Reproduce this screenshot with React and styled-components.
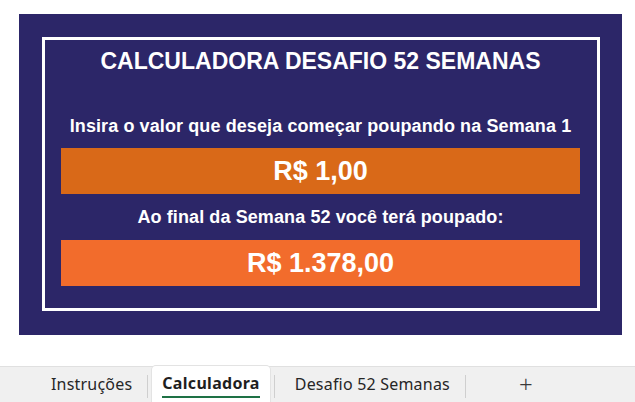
import styled, { createGlobalStyle } from "styled-components";

const GlobalStyle = createGlobalStyle`
  html, body {
    margin: 0;
    padding: 0;
    background: #ffffff;
  }
  body {
    width: 635px;
    height: 402px;
    overflow: hidden;
    font-family: "Liberation Sans", Arial, sans-serif;
  }
`;

const Page = styled.div`
  display: flex;
  flex-direction: column;
  height: 402px;
`;

const Sheet = styled.div`
  flex: 1;
  padding: 14px 13px 0 19px;
`;

const Panel = styled.div`
  width: 603px;
  height: 321px;
  box-sizing: border-box;
  background: #2c2668;
  padding: 23px 22px 24px 23px;
`;

const Frame = styled.div`
  height: 100%;
  box-sizing: border-box;
  border: 3px solid #ffffff;
  display: flex;
  flex-direction: column;
  align-items: center;
  padding: 8px 17px 0 16px;
  color: #ffffff;
`;

const Title = styled.h1`
  margin: 0;
  font-size: 23px;
  line-height: 27px;
  font-weight: bold;
`;

const Label = styled.p`
  margin: ${(p) => p.$top}px 0 0;
  font-size: 18px;
  line-height: 21px;
  font-weight: bold;
  letter-spacing: 0.1px;
`;

const ValueBox = styled.div`
  align-self: stretch;
  margin-top: ${(p) => p.$top}px;
  height: 46px;
  background: ${(p) => p.$color};
  display: flex;
  align-items: center;
  justify-content: center;
  font-size: 27px;
  line-height: 46px;
  font-weight: bold;
`;

const TabBar = styled.div`
  height: 36px;
  box-sizing: border-box;
  background: #f0f0f0;
  border-top: 1px solid #e0e0e0;
  display: flex;
  align-items: stretch;
  padding-left: 31px;
  font-family: "Noto Sans", "Open Sans", sans-serif;
  font-size: 16px;
  color: #262626;
`;

const Tab = styled.div`
  display: flex;
  align-items: center;
  padding: 0 15px 2px 20px;
  letter-spacing: 0.2px;
`;

const ActiveTab = styled.div`
  position: relative;
  display: flex;
  align-items: center;
  margin: -1px 4px 0;
  padding: 0 10px 2px;
  background: #ffffff;
  border-radius: 4px 4px 0 0;
  box-shadow: 0 0 0 1px #e3e3e3;
  font-weight: bold;
  letter-spacing: 0.3px;
  color: #1f1f1f;

  &::after {
    content: "";
    position: absolute;
    left: 10px;
    right: 10px;
    bottom: 4px;
    height: 2px;
    background: #1e7145;
  }
`;

const Separator = styled.div`
  width: 1px;
  margin: 8px 0 4px;
  background: #cfcfcf;
`;

const AddButton = styled.div`
  width: 120px;
  display: flex;
  align-items: center;
  justify-content: center;
  padding-bottom: 3px;
  font-size: 24px;
  font-weight: 300;
  color: #3a3a3a;
`;

export default function App() {
  return (
    <>
      <GlobalStyle />
      <Page>
        <Sheet>
          <Panel>
            <Frame>
              <Title>CALCULADORA DESAFIO 52 SEMANAS</Title>
              <Label $top={41}>
                Insira o valor que deseja começar poupando na Semana 1
              </Label>
              <ValueBox $top={11} $color="#d96918">
                R$ 1,00
              </ValueBox>
              <Label $top={13}>Ao final da Semana 52 você terá poupado:</Label>
              <ValueBox $top={12} $color="#f26c2c">
                R$ 1.378,00
              </ValueBox>
            </Frame>
          </Panel>
        </Sheet>
        <TabBar>
          <Tab>Instruções</Tab>
          <Separator />
          <ActiveTab>Calculadora</ActiveTab>
          <Separator />
          <Tab>Desafio 52 Semanas</Tab>
          <Separator />
          <AddButton>+</AddButton>
        </TabBar>
      </Page>
    </>
  );
}
